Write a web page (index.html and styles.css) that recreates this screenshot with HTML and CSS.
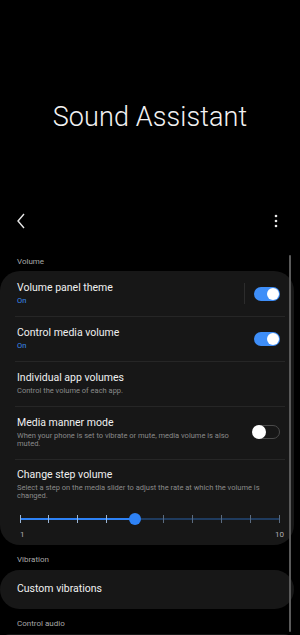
FILE: index.html
```html
<!DOCTYPE html>
<html lang="en">
<head>
    <meta charset="UTF-8">
    <meta name="viewport" content="width=device-width, initial-scale=1.0">
    <link rel="stylesheet" href="styles.css">
</head>
<body>
    <!-- Big title -->
    <header class="hero">
        <h1>Sound Assistant</h1>
    </header>

    <!-- Toolbar -->
    <div class="toolbar">
        <svg class="back" width="12" height="18" viewBox="0 0 12 18">
            <polyline points="8,2 2,9 8,16" fill="none" stroke="#e8e8e8" stroke-width="1.4"/>
        </svg>
        <svg class="more" width="4" height="16" viewBox="0 0 4 16">
            <circle cx="2" cy="3" r="1.3" fill="#e8e8e8"/>
            <circle cx="2" cy="8" r="1.3" fill="#e8e8e8"/>
            <circle cx="2" cy="13" r="1.3" fill="#e8e8e8"/>
        </svg>
    </div>

    <p class="section-label first">Volume</p>
    <div class="card">
        <div class="row">
            <div class="text">
                <p class="title">Volume panel theme</p>
                <p class="status">On</p>
            </div>
            <span class="vline"></span>
            <span class="switch on"><span class="knob"></span></span>
        </div>
        <div class="row">
            <div class="text">
                <p class="title">Control media volume</p>
                <p class="status">On</p>
            </div>
            <span class="switch on"><span class="knob"></span></span>
        </div>
        <div class="row">
            <div class="text">
                <p class="title">Individual app volumes</p>
                <p class="sub">Control the volume of each app.</p>
            </div>
        </div>
        <div class="row">
            <div class="text">
                <p class="title">Media manner mode</p>
                <p class="sub">When your phone is set to vibrate or mute, media volume is also muted.</p>
            </div>
            <span class="switch off"><span class="knob"></span></span>
        </div>
        <div class="row step">
            <div class="text">
                <p class="title">Change step volume</p>
                <p class="sub">Select a step on the media slider to adjust the rate at which the volume is changed.</p>
            </div>
            <div class="slider">
                <div class="track">
                    <span class="fill"></span>
                    <span class="tick" style="left: 0%"></span>
                    <span class="tick" style="left: 11.11%"></span>
                    <span class="tick" style="left: 22.22%"></span>
                    <span class="tick" style="left: 33.33%"></span>
                    <span class="tick dim" style="left: 55.55%"></span>
                    <span class="tick dim" style="left: 66.66%"></span>
                    <span class="tick dim" style="left: 77.77%"></span>
                    <span class="tick dim" style="left: 88.88%"></span>
                    <span class="tick dim" style="left: 100%"></span>
                    <span class="thumb"></span>
                </div>
                <div class="scale"><span>1</span><span>10</span></div>
            </div>
        </div>
    </div>

    <p class="section-label">Vibration</p>
    <div class="card">
        <div class="row single">
            <p class="title">Custom vibrations</p>
        </div>
    </div>

    <p class="section-label">Control audio</p>
    <div class="card"></div>

    <span class="scrollbar"></span>
</body>
</html>
```

FILE: styles.css
```css
body {
    margin: 0;
    background-color: #000000;
    color: #f0f0f0;
    font-family: Roboto, "Noto Sans", sans-serif;
    width: 300px;
    height: 635px;
    overflow: hidden;
    position: relative;
}

p {
    margin: 0;
}

/* Header */
.hero {
    height: 201px;
    display: flex;
    align-items: center;
    justify-content: center;
}

.hero h1 {
    margin: 0;
    margin-top: 32px;
    font-size: 27px;
    font-weight: 300;
    color: #f2f2f2;
    letter-spacing: 0.1px;
}

.toolbar {
    height: 40px;
    display: flex;
    align-items: center;
    justify-content: space-between;
    padding: 0 22px 0 16px;
}

.section-label {
    font-size: 8px;
    line-height: 10px;
    color: #a8a8a8;
    padding: 10px 0 5px 17px;
}

.section-label.first {
    padding-top: 16px;
    padding-bottom: 4px;
}

/* Cards */
.card {
    background-color: #171717;
    border-radius: 20px;
    margin-right: 6px;
    min-height: 20px;
}

.row {
    display: flex;
    align-items: center;
    padding: 10px 14px 10px 17px;
    position: relative;
}

.row + .row::before {
    content: "";
    position: absolute;
    top: 0;
    left: 15px;
    right: 9px;
    height: 1px;
    background-color: #262626;
}

.row .text {
    flex: 1;
}

.title {
    font-size: 10.5px;
    line-height: 14px;
    color: #f0f0f0;
}

.status {
    font-size: 7.5px;
    line-height: 11px;
    color: #3b8cf2;
}

.sub {
    font-size: 7.5px;
    line-height: 8.5px;
    color: #8a8a8a;
    padding-top: 2px;
    padding-right: 4px;
}

.row:nth-child(4) .sub {
    padding-right: 18px;
}

.vline {
    width: 1px;
    height: 21px;
    background-color: #2c2c2c;
    margin-right: 9px;
}

/* Switches */
.switch {
    width: 26px;
    height: 14px;
    border-radius: 7px;
    display: flex;
    align-items: center;
    box-sizing: border-box;
}

.switch.on {
    background-color: #3e8ef8;
    justify-content: flex-end;
    padding-right: 1px;
}

.switch.on .knob {
    width: 12px;
    height: 12px;
    border-radius: 50%;
    background-color: #ffffff;
}

.switch.off {
    border: 1px solid #4a4a4a;
    width: 27px;
}

.switch.off .knob {
    width: 14px;
    height: 14px;
    border-radius: 50%;
    background-color: #ffffff;
    margin-left: -2px;
}

/* Step slider */
.row.step {
    flex-direction: column;
    align-items: stretch;
    padding-top: 9px;
    padding-bottom: 6px;
}

.row.step .sub {
    padding-right: 12px;
}

.slider {
    padding: 0 1px 0 3px;
    margin-top: 17px;
}

.track {
    position: relative;
    height: 2px;
    background-color: #1f3b5e;
}

.fill {
    position: absolute;
    left: 0;
    top: 0;
    height: 2px;
    width: 44.44%;
    background-color: #2e82f5;
}

.tick {
    position: absolute;
    top: -3px;
    width: 1px;
    height: 8px;
    margin-left: -0.5px;
    background-color: #9ab6d8;
}

.tick.dim {
    background-color: #5a6b80;
}

.thumb {
    position: absolute;
    left: 44.44%;
    top: -5px;
    width: 12px;
    height: 12px;
    margin-left: -6px;
    border-radius: 50%;
    background-color: #2e82f5;
}

.scale {
    display: flex;
    justify-content: space-between;
    font-size: 8px;
    color: #b0b0b0;
    margin-top: 10px;
    margin-right: -5px;
}

.row.single {
    padding-top: 12px;
    padding-bottom: 13px;
}

.scrollbar {
    position: absolute;
    left: 289px;
    top: 255px;
    width: 2px;
    height: 377px;
    border-radius: 1px;
    background-color: #5a5a5a;
}
```
